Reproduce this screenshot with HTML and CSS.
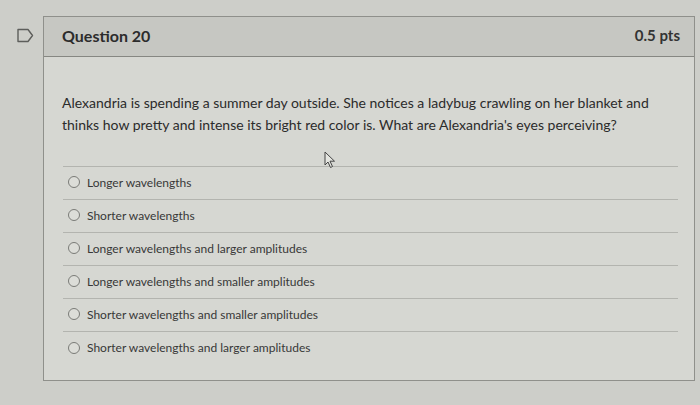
FILE: index.html
```html
<!DOCTYPE html>
<html lang="en">
<head>
<meta charset="utf-8">
<title>Question 20</title>
<link rel="stylesheet" href="styles.css">
</head>
<body>
<div class="page">
  <div class="gutter">
    <svg class="flag" width="18" height="15" viewBox="0 0 18 15" aria-hidden="true">
      <path d="M2 1.5 H12 L16.5 7.5 L12 13.5 H2 Z" fill="none" stroke="#5d5e5b" stroke-width="1.4" stroke-linejoin="round"/>
    </svg>
  </div>
  <div class="card">
    <div class="card-header">
      <span class="q-title">Question 20</span>
      <span class="q-pts">0.5 pts</span>
    </div>
    <div class="card-body">
      <p class="q-text">Alexandria is spending a summer day outside. She notices a ladybug crawling on her blanket and thinks how pretty and intense its bright red color is. What are Alexandria's eyes perceiving?</p>
      <div class="answers">
        <label class="answer"><span class="radio"></span><span>Longer wavelengths</span></label>
        <label class="answer"><span class="radio"></span><span>Shorter wavelengths</span></label>
        <label class="answer"><span class="radio"></span><span>Longer wavelengths and larger amplitudes</span></label>
        <label class="answer"><span class="radio"></span><span>Longer wavelengths and smaller amplitudes</span></label>
        <label class="answer"><span class="radio"></span><span>Shorter wavelengths and smaller amplitudes</span></label>
        <label class="answer"><span class="radio"></span><span>Shorter wavelengths and larger amplitudes</span></label>
      </div>
      <svg class="cursor" width="12" height="18" viewBox="0 0 12 18" aria-hidden="true">
        <path d="M1 1 L1 14 L4 11 L6.5 16.5 L8.5 15.5 L6 10.2 L10.5 10.2 Z" fill="#e4e5e0" stroke="#444" stroke-width="1" stroke-linejoin="round"/>
      </svg>
    </div>
  </div>
</div>
</body>
</html>
```

FILE: styles.css
```css
html, body {
  margin: 0;
  padding: 0;
}
body {
  width: 700px;
  height: 405px;
  overflow: hidden;
  background: #cdcec9;
  font-family: Lato, "Open Sans", "Liberation Sans", sans-serif;
  color: #2f2f2e;
}
.page {
  display: flex;
  align-items: flex-start;
  padding-top: 16px;
}
.gutter {
  width: 43px;
  flex: none;
  display: flex;
  justify-content: flex-start;
  padding-top: 12px;
  padding-left: 16px;
  box-sizing: border-box;
}
.flag {
  display: block;
}
.card {
  width: 652px;
  height: 365px;
  box-sizing: border-box;
  border: 1px solid #8f908b;
  background: #d6d7d2;
  display: flex;
  flex-direction: column;
}
.card-header {
  height: 40px;
  box-sizing: border-box;
  background: #c6c7c2;
  border-bottom: 1px solid #868782;
  display: flex;
  align-items: center;
  justify-content: space-between;
  padding: 0 14px 3px 18px;
}
.q-title {
  font-size: 16px;
  font-weight: 700;
  color: #2c2c2c;
}
.q-pts {
  font-size: 15px;
  font-weight: 700;
  color: #333;
}
.card-body {
  position: relative;
  padding: 35px 16px 0 18px;
}
.q-text {
  margin: 0;
  font-size: 14px;
  line-height: 22px;
  color: #2b2b2b;
  padding-right: 20px;
}
.answers {
  margin-top: 30px;
  margin-left: 1px;
  border-top: 1px solid #b3b4af;
}
.answer {
  display: flex;
  align-items: center;
  height: 33px;
  box-sizing: border-box;
  border-bottom: 1px solid #b3b4af;
  font-size: 12px;
  color: #383838;
  padding: 0 0 2px 5px;
}
.answer:last-child {
  border-bottom: none;
}
.radio {
  width: 10px;
  height: 10px;
  border: 1.3px solid #7a7b77;
  border-radius: 50%;
  background: #dcddd8;
  margin-right: 7px;
  flex: none;
}
.cursor {
  position: absolute;
  left: 280px;
  top: 94px;
}
```
